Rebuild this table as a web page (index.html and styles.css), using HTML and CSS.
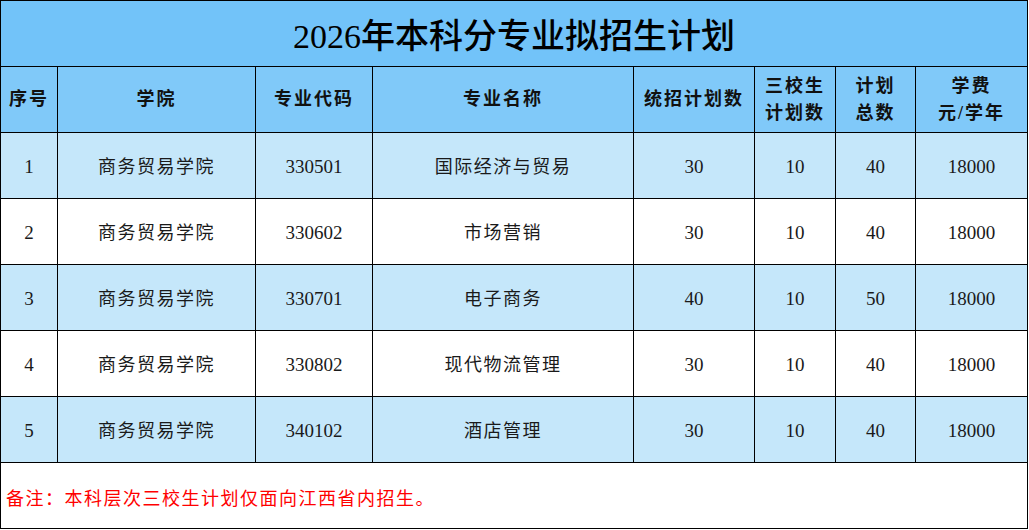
FILE: index.html
```html
<!DOCTYPE html>
<html lang="zh-CN">
<head>
<meta charset="utf-8">
<title>2026年本科分专业拟招生计划</title>
<link rel="stylesheet" href="styles.css">
</head>
<body>
<table class="plan">
  <colgroup>
    <col class="c1"><col class="c2"><col class="c3"><col class="c4"><col class="c5"><col class="c6"><col class="c7"><col class="c8">
  </colgroup>
  <thead>
    <tr class="title-row"><th colspan="8">2026年本科分专业拟招生计划</th></tr>
    <tr class="head-row">
      <th>序号</th>
      <th>学院</th>
      <th>专业代码</th>
      <th>专业名称</th>
      <th>统招计划数</th>
      <th>三校生<br>计划数</th>
      <th>计划<br>总数</th>
      <th>学费<br>元/学年</th>
    </tr>
  </thead>
  <tbody>
    <tr class="odd"><td>1</td><td>商务贸易学院</td><td>330501</td><td>国际经济与贸易</td><td>30</td><td>10</td><td>40</td><td>18000</td></tr>
    <tr class="even"><td>2</td><td>商务贸易学院</td><td>330602</td><td>市场营销</td><td>30</td><td>10</td><td>40</td><td>18000</td></tr>
    <tr class="odd"><td>3</td><td>商务贸易学院</td><td>330701</td><td>电子商务</td><td>40</td><td>10</td><td>50</td><td>18000</td></tr>
    <tr class="even"><td>4</td><td>商务贸易学院</td><td>330802</td><td>现代物流管理</td><td>30</td><td>10</td><td>40</td><td>18000</td></tr>
    <tr class="odd"><td>5</td><td>商务贸易学院</td><td>340102</td><td>酒店管理</td><td>30</td><td>10</td><td>40</td><td>18000</td></tr>
  </tbody>
  <tfoot>
    <tr class="note-row"><td colspan="8">备注：本科层次三校生计划仅面向江西省内招生。</td></tr>
  </tfoot>
</table>
</body>
</html>
```
FILE: styles.css
```css
html, body {
  margin: 0;
  padding: 0;
  background: #ffffff;
}

.plan {
  width: 1027px;
  table-layout: fixed;
  border-collapse: collapse;
  font-family: "Liberation Serif", "Noto Sans CJK SC", serif;
  color: #1a1a1a;
}

.c1 { width: 57px; }
.c2 { width: 198px; }
.c3 { width: 117px; }
.c4 { width: 261px; }
.c5 { width: 121px; }
.c6 { width: 81px; }
.c7 { width: 80px; }
.c8 { width: 112px; }

.plan th,
.plan td {
  border: 1.5px solid #000;
  padding: 0;
  text-align: center;
  vertical-align: middle;
  height: 65px;
}

.title-row th {
  background: #72c3f9;
  font-size: 34px;
  font-weight: 500;
  color: #000;
  letter-spacing: 0;
}

.head-row th {
  background: #80c9f9;
  font-size: 18px;
  font-weight: bold;
  line-height: 27px;
  letter-spacing: 2px;
  color: #111;
}

.plan tbody td {
  font-size: 19px;
  line-height: 24px;
  padding-top: 3px;
  height: 62px;
}

.plan tbody td:nth-child(2),
.plan tbody td:nth-child(4) {
  font-size: 18px;
  letter-spacing: 1.5px;
}

.odd td { background: #c5e7fa; }
.even td { background: #ffffff; }

.note-row td {
  text-align: left;
  padding-left: 5px;
  padding-top: 3px;
  height: 62px;
  color: #ff0000;
  font-size: 18px;
  letter-spacing: 1.5px;
  background: #fff;
}
```
